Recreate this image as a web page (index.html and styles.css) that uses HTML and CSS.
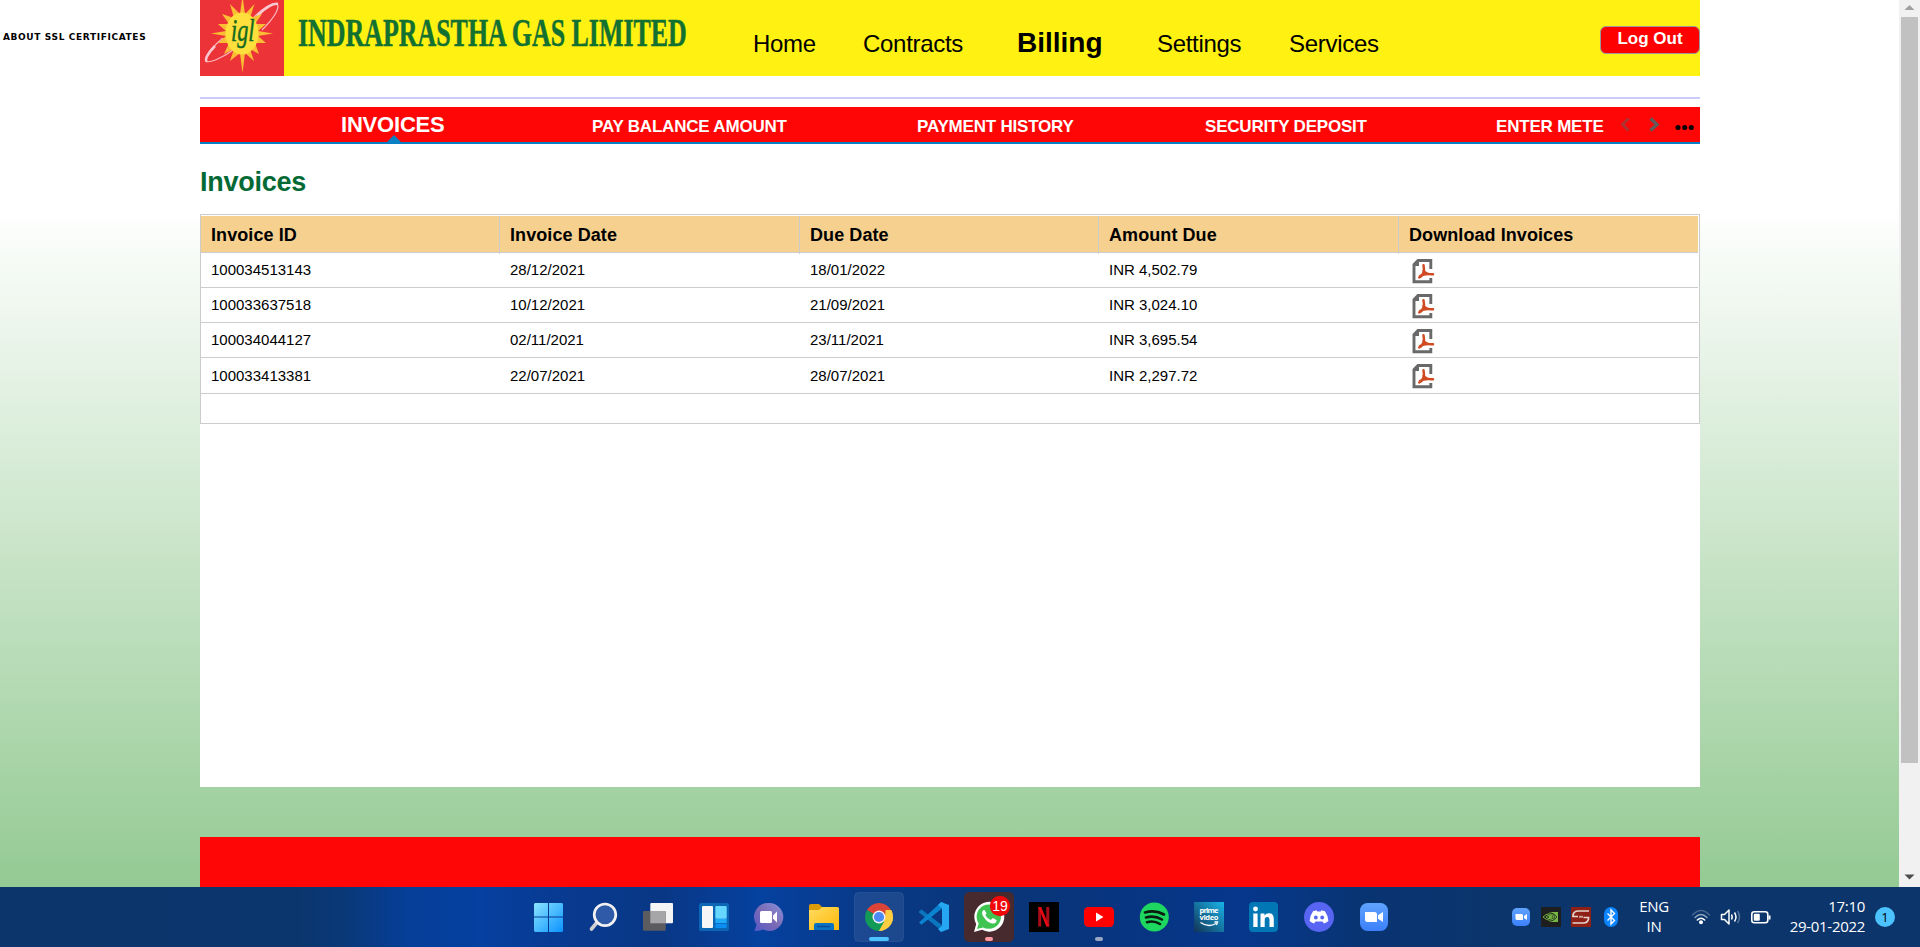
FILE: index.html
```html
<!DOCTYPE html>
<html lang="en">
<head>
<meta charset="utf-8">
<title>Invoices - Indraprastha Gas Limited</title>
<link rel="stylesheet" href="styles.css">
</head>
<body>
<svg width="0" height="0" class="defs">
  <defs>
    <symbol id="pdf" viewBox="0 0 24 26">
      <path d="M19.800 11V2.500H7L3 6.500v17.300h16.800V20" fill="none" stroke="#696969" stroke-width="2.900"/>
      <path d="M1.700 8 8 1.200V8z" fill="#696969"/>
      <path d="M12.500 7.200c.8 3.300.8 5.300-.2 7.700-1 2.300-2.200 3.700-4 4.500M12.500 12.500c1.300 2.700 4.800 4 9.500 3.800M9 18c3.500-2.300 7-2.500 12-1.800" fill="none" stroke="#d04a22" stroke-width="2.500" stroke-linecap="round"/>
    </symbol>
    <linearGradient id="win" x1="0" y1="0" x2="1" y2="1"><stop offset="0" stop-color="#8be4ff"/><stop offset="1" stop-color="#0a93ff"/></linearGradient>
    <linearGradient id="chatg" x1="1" y1="0" x2="0" y2="1"><stop offset="0" stop-color="#8791dc"/><stop offset=".5" stop-color="#7d6bb5"/><stop offset="1" stop-color="#5558c8"/></linearGradient>
    <linearGradient id="fold" x1="0" y1="0" x2="1" y2="1"><stop offset="0" stop-color="#ffdc60"/><stop offset="1" stop-color="#ffb90a"/></linearGradient>
    <linearGradient id="prime" x1="1" y1="0" x2="0" y2="1"><stop offset="0" stop-color="#18b4e8"/><stop offset="1" stop-color="#123456"/></linearGradient>
    <linearGradient id="zoomg" x1="0" y1="0" x2="0" y2="1"><stop offset="0" stop-color="#60a3ff"/><stop offset="1" stop-color="#3b80fa"/></linearGradient>
  </defs>
</svg>
<div class="viewport">
  <main class="page">
    <aside class="ssl">ABOUT SSL CERTIFICATES</aside>
    <div class="column">
      <div class="sheet">
        <header class="banner">
          <svg class="brand" width="500" height="76" viewBox="0 0 500 76">
            <rect width="84" height="76" fill="#ec3338"/>
            <path d="M54 17C64 7 77 0 78 6c0 5-6 14-16 24" fill="none" stroke="#f8b8c0" stroke-width="1.200"/>
            <path d="M57 16C66 7 74 3 78 4" fill="none" stroke="#f8c8ce" stroke-width="2.500"/>
            <path d="M23 38C12 47 4 57 6 61c3 3 18-4 30-13" fill="none" stroke="#f8b8c0" stroke-width="1.200"/>
            <path d="M15 46C8 53 4 60 7 61.500" fill="none" stroke="#f8c8ce" stroke-width="2.500"/>
            <path d="M42.500 -4 45 14 54.500 4 50 18 62 14 55 24 66 24 58 31 73 33.500 58 36 66 43 55 43 59 54 50 49 54 61 45 53 42.500 73 40 53 30 61 34 49 24 54 29 43 18 43 26 36 11 33.500 26 31 18 24 29 24 22 14 34 18 30 4 40 14Z" fill="#fbbd34"/>
            <ellipse cx="42" cy="33.500" rx="16.500" ry="21" fill="#ffdf3c"/>
            <g transform="translate(31 41) scale(.72 1)"><text class="mark">igl</text></g>
            <g transform="translate(98 46) scale(.6 1)"><text class="company" textLength="648" lengthAdjust="spacingAndGlyphs">INDRAPRASTHA GAS LIMITED</text></g>
          </svg>
          <nav class="menu">
            <a>Home</a><a>Contracts</a><a class="current">Billing</a><a>Settings</a><a>Services</a>
          </nav>
          <button class="logout">Log Out</button>
        </header>
        <div class="rule"></div>
        <nav class="tabs">
          <a class="tab active">INVOICES<svg class="pointer" width="14" height="7" viewBox="0 0 14 7"><path d="M7 0l7 7H0z" fill="#0a80c4"/></svg></a>
          <a class="tab">PAY BALANCE AMOUNT</a>
          <a class="tab">PAYMENT HISTORY</a>
          <a class="tab">SECURITY DEPOSIT</a>
          <a class="tab">ENTER METE</a>
          <svg class="pager" width="78" height="35" viewBox="0 0 78 35">
            <path d="M8.500 11.500 2.500 17.500l6 6" fill="none" stroke="#a33" stroke-width="2.800"/>
            <path d="M30.500 11.500l6.500 6-6.500 6" fill="none" stroke="#5c5c5c" stroke-width="3.200"/>
            <g fill="#000"><circle cx="58" cy="20.500" r="2.500"/><circle cx="64.700" cy="20.500" r="2.500"/><circle cx="71.300" cy="20.500" r="2.500"/></g>
          </svg>
        </nav>
        <h1 class="title">Invoices</h1>
        <div class="grid">
          <div class="row head"><span>Invoice ID</span><span>Invoice Date</span><span>Due Date</span><span>Amount Due</span><span>Download Invoices</span></div>
          <div class="row"><span>100034513143</span><span>28/12/2021</span><span>18/01/2022</span><span>INR 4,502.79</span><span><svg class="pdf"><use href="#pdf"/></svg></span></div>
          <div class="row"><span>100033637518</span><span>10/12/2021</span><span>21/09/2021</span><span>INR 3,024.10</span><span><svg class="pdf"><use href="#pdf"/></svg></span></div>
          <div class="row"><span>100034044127</span><span>02/11/2021</span><span>23/11/2021</span><span>INR 3,695.54</span><span><svg class="pdf"><use href="#pdf"/></svg></span></div>
          <div class="row tall"><span>100033413381</span><span>22/07/2021</span><span>28/07/2021</span><span>INR 2,297.72</span><span><svg class="pdf"><use href="#pdf"/></svg></span></div>
        </div>
      </div>
      <footer class="footer"></footer>
    </div>
  </main>
  <div class="scrollbar">
    <svg width="21" height="17" viewBox="0 0 21 17"><path d="M10.500 5l5 5h-10z" fill="#a0a0a0"/></svg>
    <div class="thumb"></div>
    <svg width="21" height="17" viewBox="0 0 21 17"><path d="M10.500 9.500l5-5h-10z" fill="#4d4d4d"/></svg>
  </div>
</div>
<div class="taskbar">
  <div class="apps">
    <svg viewBox="0 0 50 50"><path d="M11 11h13v13.500H10V12zM25 11h13l1 1v12.500H25zM10 25.500h14V40H11l-1-1zM25 25.500h14V39l-1 1H25z" fill="url(#win)"/></svg>
    <svg viewBox="0 0 50 50"><path d="M17.500 31 12.500 37" stroke="#d0d0d0" stroke-width="3.600" stroke-linecap="round"/><circle cx="26" cy="22.800" r="10.800" fill="#2e5aa8" stroke="#f2f2f2" stroke-width="2.700"/></svg>
    <svg viewBox="0 0 50 50"><rect x="16.300" y="11" width="22.700" height="20.300" rx="1" fill="#f4f4f4"/><rect x="9" y="19" width="22.700" height="19.700" rx="1" fill="#5c5c60"/><path d="M16.300 19h15.400v12.300H16.300z" fill="#a6a6a8"/></svg>
    <svg viewBox="0 0 50 50"><rect x="10" y="11" width="30" height="28" rx="2" fill="#0b66b5"/><rect x="13" y="14" width="11" height="22" rx="1" fill="#f6f6f6"/><rect x="26.300" y="14" width="11.400" height="12.700" rx="1" fill="#66d8ff"/><rect x="26.300" y="27" width="11.400" height="4" fill="#1eaaf8"/><rect x="26.300" y="31.800" width="11.400" height="4.200" rx="1" fill="#0b8df2"/></svg>
    <svg viewBox="0 0 50 50"><path d="M25 11a14 14 0 1 1-6 26.500q-4 1.800-8.500 1.300l2-6A14 14 0 0 1 25 11z" fill="url(#chatg)"/><rect x="16" y="19" width="12" height="12" rx="1.500" fill="#fff"/><path d="M29 23.500l4-4v11l-4-4z" fill="#fff"/></svg>
    <svg viewBox="0 0 50 50"><path d="M10 14q0-2 2-2h8l3 3v4H10z" fill="#dc9b00"/><path d="M10 18h10l3-3h15.500q1.500 0 1.500 1.500V38H10z" fill="url(#fold)"/><path d="M15 38v-5q0-2 2-2h16q2 0 2 2v5z" fill="#0b73c4"/><path d="M18 34.500h13" stroke="#0a4f95" stroke-width="1.500"/></svg>
    <svg viewBox="0 0 50 50"><rect x=".5" y=".5" width="49" height="49" rx="4" fill="#fff" fill-opacity=".08" stroke="#fff" stroke-opacity=".08"/><path d="M25 25 12.880 18a14 14 0 0 1 24.240 0z" fill="#db4437"/><path d="M25 25 37.120 18A14 14 0 0 1 25 39z" fill="#ffcd40"/><path d="M25 39A14 14 0 0 1 12.880 18L25 25l5.500 4z" fill="#129b57"/><path d="M25 18h12.120l-5 8z" fill="#db4437"/><path d="M31.500 18h5.620a14 14 0 0 1-12.120 21l6-10z" fill="#ffcd40"/><circle cx="25" cy="25" r="6.500" fill="#f1f1f1"/><circle cx="25" cy="25" r="5.100" fill="#4c8bf5"/><rect x="15" y="45" width="20" height="4" rx="2" fill="#4cc2ff"/></svg>
    <svg viewBox="0 0 50 50"><path d="M10 20l2.500-2 21 16v5z" fill="#0a76bd" stroke="#0a76bd"/><path d="M10.500 30.500l2 1.700L33 16v-6z" fill="#0a83d0" stroke="#0a83d0"/><path d="M32 10l8 3v24l-8 3-3-3 4-3V16l-4-3z" fill="#26a7f2"/></svg>
    <svg viewBox="0 0 50 50"><rect width="50" height="50" rx="5" fill="#462a2e"/><path d="M10 40l2.200-8A15 15 0 1 1 18 37.800z" fill="#fff"/><path d="M13 37l1.700-5.500A12.200 12.200 0 1 1 19 35.400z" fill="#3fc351"/><path d="M20.500 18c-2 0-3 2.500-2 5 2.500 5 6 8 10.500 8.500 2.500 0 4-1.800 3.500-3.500l-3.700-2-2 2q-4-1.700-5.500-5l1.300-1.700z" fill="#fff"/><circle cx="36" cy="14" r="10.200" fill="#f00707"/><text x="36" y="18.800" class="count" text-anchor="middle">19</text><rect x="21" y="45" width="8" height="4" rx="2" fill="#ff99a4"/></svg>
    <svg viewBox="0 0 50 50"><path d="M10 10h30v30H10z" fill="#000"/><path d="M20.700 15v19.500M28.800 15v19.500" stroke="#a80c16" stroke-width="3"/><path d="M19.200 15h3l8.100 19.500h-3z" fill="#e50914"/></svg>
    <svg viewBox="0 0 50 50"><rect x="10" y="15" width="30" height="20" rx="4.500" fill="#f00"/><path d="M22 20.500v9l7.500-4.500z" fill="#fff"/><rect x="21" y="45" width="8" height="4" rx="2" fill="#9aa7c3"/></svg>
    <svg viewBox="0 0 50 50"><circle cx="25.300" cy="25" r="14.500" fill="#1ed760"/><path d="M16 20.500q10-3 19 2M17 25.500q8.500-2.500 16 2M18 30.200q7-2 13 1.800" fill="none" stroke="#0b1c10" stroke-width="2.600" stroke-linecap="round"/></svg>
    <svg viewBox="0 0 50 50"><path d="M10 10h30v30H10z" fill="url(#prime)"/><text x="25" y="20.500" class="prime" text-anchor="middle" textLength="19">prime</text><text x="25" y="28" class="prime" text-anchor="middle" textLength="19">video</text><path d="M16.500 30.500q8 5.500 15.500 1M30.500 30h3l-1 3" fill="none" stroke="#fff" stroke-width="1.300"/></svg>
    <svg viewBox="0 0 50 50"><rect x="10" y="10" width="29" height="30" rx="4" fill="#0277b5"/><circle cx="16.500" cy="17" r="2.400" fill="#fff"/><path d="M14.300 21.500h4.300V35h-4.300zM21.500 21.500h4V23.400q1.500-2.200 4.300-2.200 5 0 5 6V35h-4.300v-7q0-3-2.300-3-2.500 0-2.500 3v7h-4.200z" fill="#fff"/></svg>
    <svg viewBox="0 0 50 50"><circle cx="25" cy="25" r="15" fill="#5865f2"/><path d="M19 19.300l3.500-1.100.8 1.200h3.400l.8-1.200 3.500 1.100q3.200 4.700 3.400 9.700-2 1.900-4.500 2.500l-1.300-1.900h-7.200l-1.300 1.900q-2.500-.6-4.500-2.500.2-5 3.400-9.700z" fill="#fff"/><circle cx="21.800" cy="25.500" r="1.900" fill="#5865f2"/><circle cx="28.200" cy="25.500" r="1.900" fill="#5865f2"/></svg>
    <svg viewBox="0 0 50 50"><rect x="11" y="11" width="28" height="28" rx="7.500" fill="url(#zoomg)"/><path d="M16 20h9.500q2.500 0 2.500 2.500V30h-9.500q-2.500 0-2.500-2.500zM29 23.300l5-3.300v10l-5-3.300z" fill="#fff"/></svg>
  </div>
  <div class="tray">
    <svg class="trayicons" width="108" height="20" viewBox="0 0 108 20">
      <rect x="0" y="1" width="18" height="18" rx="5" fill="url(#zoomg)"/><path d="M3.500 7H10l1 1v5H4.500l-1-1zM12 9l3-2v6l-3-2z" fill="#fff"/>
      <path d="M29 0h20v20H29z" fill="#1e1e1e"/><path d="M37 5h9v10h-9z" fill="#76b743"/><path d="M31 10q6-7.500 13 0-6 7.500-13 0zM34 10q4-5 8 0-4 4-8 0z" fill="none" stroke="#1e1e1e" stroke-width="1.800"/><path d="M31 10q6-6.500 13 0-6 6.500-13 0zM34 10q4-4 8 0-4 3.500-8 0z" fill="none" stroke="#76b743"/><circle cx="38" cy="10" r="1.500" fill="#76b743"/>
      <path d="M59 0h20v20H59z" fill="#8f2016"/><path d="M77 4H66q-4 0-5 4v1.500h5m-5.500 6.500h11q4 0 5-4v-1.500h-5" fill="none" stroke="#e5d5d0" stroke-width="1.700"/><path d="M67 9.800h4" fill="none" stroke="#e5d5d0" stroke-opacity=".7" stroke-width="2"/>
      <rect x="92" y="0" width="14" height="20" rx="7" fill="#0a84ff"/><path d="M95.500 6.500l7 7-3.500 3.500V3l3.500 3.500-7 7" fill="none" stroke="#fff" stroke-width="1.400"/>
    </svg>
    <div class="lang">ENG<br>IN</div>
    <svg class="status" width="82" height="20" viewBox="0 0 82 20">
      <g fill="none" stroke="#fff" stroke-width="1.500" stroke-linecap="round"><path d="M1.500 8q8.500-9 17 0" stroke-opacity=".25"/><path d="M4 10.500q6-6 12 0" stroke-opacity=".55"/><path d="M6.300 13q3.700-3.500 7.400 0"/></g><circle cx="10" cy="15.300" r="2" fill="#fff"/>
      <g fill="none" stroke="#fff" stroke-width="1.500" stroke-linejoin="round"><path d="M30.500 7.500h3l4.500-4.500v14l-4.500-4.500h-3z"/><path d="M40.500 7.500q1.500 2.500 0 5M43.500 5.500q3 4.500 0 9"/><path d="M46.500 4q4 6 0 12" stroke-opacity=".3"/></g>
      <rect x="60.800" y="4.800" width="16" height="11" rx="2.500" fill="none" stroke="#fff" stroke-width="1.600"/><rect x="62.800" y="6.800" width="6" height="7" rx="1" fill="#fff"/><path d="M78.500 8.500v4" stroke="#fff" stroke-width="2"/>
    </svg>
    <div class="clock">17:10<br>29-01-2022</div>
    <div class="notice">1</div>
  </div>
</div>
</body>
</html>
```

FILE: styles.css
```css
* { box-sizing: border-box; }
body {
  margin: 0;
  width: 1920px;
  height: 947px;
  overflow: hidden;
  font-family: "Liberation Sans", Arial, sans-serif;
  color: #000;
}
.defs { position: absolute; }
.viewport { display: flex; height: 887px; }
.page {
  flex: 1;
  display: flex;
  background: linear-gradient(#fff 206px, #94ca93 887px);
}
.ssl {
  width: 200px;
  padding: 31px 0 0 3px;
  font: bold 9px/12px "DejaVu Sans", Verdana, sans-serif;
  letter-spacing: 0.63px;
  white-space: nowrap;
}
.column { width: 1500px; }
.sheet { height: 787px; background: #fff; }
.banner { display: flex; height: 76px; background: #fff112; }
.brand { flex: none; }
.mark { font: italic 31px "Liberation Serif", serif; fill: #146b20; stroke: #146b20; stroke-width: .5px; }
.company { font: bold 39px "Liberation Serif", serif; fill: #127031; stroke: #127031; stroke-width: .5px; }
.menu {
  display: grid;
  grid-template-columns: 110px 154px 140px 132px 170px;
  align-items: baseline;
  align-content: start;
  width: 706px;
  margin-left: 53px;
  padding-top: 27px;
  font-size: 24px;
  line-height: 32px;
  letter-spacing: -0.3px;
}
.menu .current { font-size: 28px; font-weight: bold; letter-spacing: 0; }
.logout {
  width: 100px;
  height: 28px;
  margin: 26px 0 0 141px;
  padding: 0 0 2px;
  border: 1px solid #999;
  border-radius: 6px;
  background: #f00;
  color: #fff;
  font: bold 17px/20px "Liberation Sans", Arial, sans-serif;
}
.rule { height: 2px; margin-top: 21px; background: #ccccfb; }
.tabs {
  display: grid;
  grid-template-columns: 251px 325px 288px 291px 124px 80px;
  height: 37px;
  margin-top: 8px;
  padding-left: 141px;
  border-bottom: 2px solid #0a80c4;
  background: #ff0606;
  color: #fff;
  font-size: 17px;
  font-weight: bold;
  line-height: 39px;
  white-space: nowrap;
}
.tab { letter-spacing: -0.200px; }
.tab.active { position: relative; font-size: 22px; line-height: 36px; }
.pointer { position: absolute; left: 46px; top: 28px; }
.title {
  margin: 22px 0 0;
  color: #046a35;
  font-size: 27px;
  line-height: 32px;
  letter-spacing: -0.25px;
}
.grid {
  height: 210px;
  margin-top: 16px;
  padding: 1px 1px 0 0;
  border: 1px solid #ccc;
}
.row {
  display: grid;
  grid-template-columns: 298px 300px 299px 300px 300px;
  height: 35px;
  border-bottom: 1px solid #ccc;
  font-size: 15px;
  line-height: 33px;
}
.row.head {
  height: 37px;
  background: #f6d08f;
  font-size: 18px;
  font-weight: bold;
  line-height: 38px;
  letter-spacing: 0.08px;
}
.row.tall { height: 36px; line-height: 35px; margin-right: -1px; }
.row span { padding-left: 10px; }
.row span + span { padding-left: 11px; }
.head span + span { padding-left: 10px; border-left: 1px solid #ccc; }
.pdf { display: block; width: 24px; height: 26px; margin: 5px 0 0 2px; }
.footer { height: 50px; margin-top: 50px; background: #ff0606; }
.scrollbar { display: flex; flex-direction: column; width: 21px; background: #f1f1f1; }
.thumb { width: 17px; height: 746px; margin: 0 2px 107px; background: #c1c1c1; }
.scrollbar svg { flex: none; }
.taskbar {
  display: flex;
  height: 60px;
  padding-left: 524px;
  background: linear-gradient(90deg, #0b356b 0, #0b366d 300px, #0a3878 345px, #053f99 410px, #0640a0 480px, #083a90 570px, #093785 660px, #0541a0 760px, #093a89 860px, #0a3577 1000px, #083581 1130px, #06378c 1240px, #093472 1370px, #0b356b 1500px);
}
.apps { display: flex; gap: 5px; padding-top: 5px; }
.apps svg { width: 50px; height: 50px; }
.count { font: 14px "Liberation Sans", sans-serif; fill: #fff; }
.prime { font: bold 7.500px "Open Sans", sans-serif; fill: #fff; }
.tray {
  display: flex;
  margin-left: 113px;
  color: #fff;
  font: 15px/20px "Open Sans", "Noto Sans", sans-serif;
}
.trayicons { margin-top: 20px; }
.lang { width: 40px; margin-left: 14px; padding-top: 9px; text-align: center; letter-spacing: -0.3px; }
.status { margin: 20px 0 0 17px; }
.clock { width: 92px; padding-top: 9px; text-align: right; letter-spacing: -0.300px; }
.notice {
  width: 20px;
  height: 20px;
  margin: 20px 0 0 10px;
  border-radius: 50%;
  background: #4cc2ff;
  color: #000;
  font-size: 13px;
  text-align: center;
}
```
